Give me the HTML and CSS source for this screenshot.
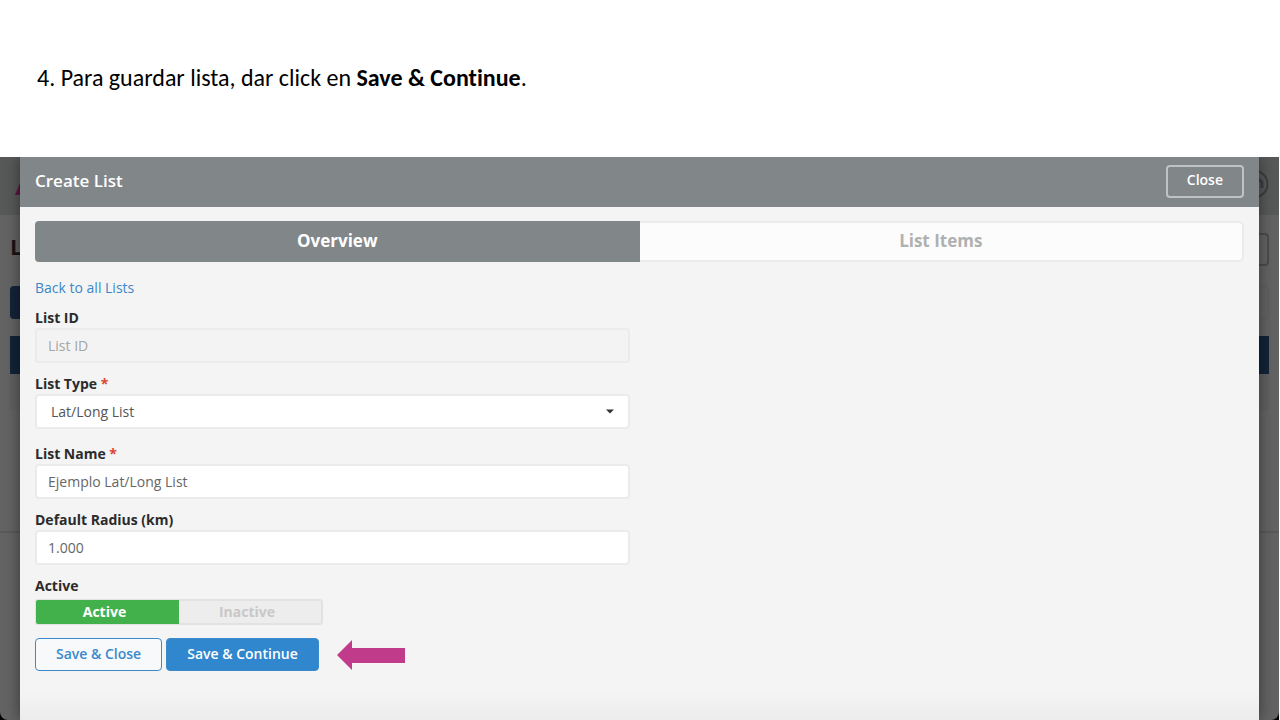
FILE: index.html
```html
<!DOCTYPE html>
<html lang="es">
<head>
<meta charset="utf-8">
<meta name="viewport" content="width=device-width, initial-scale=1">
<title>Create List</title>
<link rel="stylesheet" href="styles.css">
</head>
<body>
<header class="instruction">
  <p>4. Para guardar lista, dar click en <strong>Save &amp; Continue</strong>.</p>
</header>
<main class="stage">
  <div class="backdrop" aria-hidden="true">
    <div class="backdrop-window">
      <div class="backdrop-bar">
        <svg class="backdrop-logo" width="28" height="22" viewBox="0 0 28 22"><path d="M0 22 9 0h6l10 22h-6L12 8 6 22z" fill="#5c1540"/></svg>
        <svg class="backdrop-help" width="30" height="30" viewBox="0 0 30 30" fill="none" stroke="#3c3e40" stroke-width="2"><circle cx="15" cy="15" r="13.500"/><path d="M16 11h3q4 0 4 4v4" stroke-width="3"/></svg>
      </div>
      <div class="backdrop-title"><span>L</span><i class="backdrop-button"></i></div>
      <div class="backdrop-tools"><i class="backdrop-primary"></i><i class="backdrop-search"></i></div>
      <div class="backdrop-table"></div>
    </div>
  </div>
  <section class="modal" role="dialog" aria-labelledby="modal-title">
    <div class="modal-header">
      <h1 id="modal-title">Create List</h1>
      <button class="button button-close" type="button">Close</button>
    </div>
    <form class="modal-body">
      <div class="tabs" role="tablist">
        <button class="tab tab-active" type="button" role="tab" aria-selected="true">Overview</button>
        <button class="tab" type="button" role="tab" aria-selected="false">List Items</button>
      </div>
      <a class="back-link" href="#">Back to all Lists</a>
      <div class="field">
        <label for="list-id">List ID</label>
        <input class="control control-disabled" id="list-id" type="text" placeholder="List ID" disabled>
      </div>
      <div class="field field-select">
        <label for="list-type">List Type <span class="required">*</span></label>
        <div class="select-wrap">
          <select class="control" id="list-type"><option>Lat/Long List</option></select>
          <svg class="caret" width="8" height="5" viewBox="0 0 8 5"><path d="M0 .5h8L4 4.500z" fill="#333"/></svg>
        </div>
      </div>
      <div class="field">
        <label for="list-name">List Name <span class="required">*</span></label>
        <input class="control" id="list-name" type="text" value="Ejemplo Lat/Long List">
      </div>
      <div class="field">
        <label for="radius">Default Radius (km)</label>
        <input class="control" id="radius" type="text" value="1.000">
      </div>
      <fieldset class="status">
        <legend>Active</legend>
        <div class="toggle">
          <input class="toggle-input" type="radio" name="status" id="status-on" checked>
          <label class="toggle-option" for="status-on">Active</label>
          <input class="toggle-input" type="radio" name="status" id="status-off">
          <label class="toggle-option" for="status-off">Inactive</label>
        </div>
      </fieldset>
      <div class="actions">
        <button class="button button-outline" type="button">Save &amp; Close</button>
        <button class="button button-primary" type="button">Save &amp; Continue</button>
        <svg class="arrow" width="68" height="30" viewBox="0 0 68 30" aria-hidden="true"><path d="M0 15 15 0v8h53v15H15v7z" fill="#c03c8a"/></svg>
      </div>
    </form>
  </section>
</main>
</body>
</html>
```
FILE: styles.css
```css
*, *::before, *::after { box-sizing: border-box; }

body {
  margin: 0;
  min-height: 100vh;
  display: flex;
  flex-direction: column;
  background: #fff;
  color: #333;
  font-family: "Open Sans", "Noto Sans", sans-serif;
  font-size: 14px;
  line-height: 20px;
}

button, input, select { font: inherit; }

.instruction {
  padding: 62px 37px 63px;
  color: #000;
  font-family: Carlito, Lato, sans-serif;
  font-size: 24px;
  font-variant-ligatures: none;
  line-height: 32px;
}
.instruction p { margin: 0; }

.stage {
  flex: 1;
  display: grid;
  margin-right: 1px;
  overflow: hidden;
  background: #000;
}
.backdrop, .modal { grid-area: 1 / 1; }

/* dimmed page behind the dialog */
.backdrop {
  display: flex;
  flex-direction: column;
}
.backdrop-window {
  flex: 1;
  border-radius: 0 0 8px 8px;
  background: linear-gradient(transparent 374px, #595959 374px, #595959 376px, transparent 376px), #636363;
}
.backdrop-bar {
  display: flex;
  justify-content: space-between;
  align-items: center;
  height: 58px;
  padding: 0 10px 4px 15px;
  background: #575858;
}
.backdrop-title, .backdrop-tools {
  display: flex;
  justify-content: space-between;
  align-items: center;
  padding: 0 10px;
}
.backdrop-title {
  height: 68px;
  color: #1a1414;
  font-size: 22px;
  font-weight: 700;
}
.backdrop-title span { padding-bottom: 6px; }
.backdrop-button, .backdrop-search, .backdrop-primary {
  width: 80px;
  height: 33px;
  border-radius: 4px;
}
.backdrop-button { border: 2px solid #4b4c4d; }
.backdrop-search { border: 1px solid #5d5d5d; }
.backdrop-primary { background: #142339; }
.backdrop-tools {
  height: 53px;
  padding-bottom: 14px;
}
.backdrop-table {
  height: 196px;
  margin: 0 10px;
  background: linear-gradient(#122438 38px, #606060 38px, #606060 74px, transparent 74px);
}

.modal {
  margin: 0 20px;
  background: linear-gradient(to top, #ececec, #f4f4f4 30px);
  box-shadow: 0 0 14px rgba(0, 0, 0, .45);
  z-index: 1;
}
.modal-header {
  display: flex;
  justify-content: space-between;
  align-items: center;
  height: 50px;
  padding: 0 15px 2px;
  background: #818689;
  color: #fff;
}
.modal-header h1 {
  margin: 0;
  font-size: 17px;
  font-weight: 600;
}
.modal-body { padding: 14px 15px 20px; }

.button {
  height: 33px;
  border: 1px solid #3a8acb;
  border-radius: 4px;
  padding: 0 20px 2px;
  font-weight: 600;
  line-height: 20px;
}
.button-close {
  padding: 0 19px 2px;
  border: 2px solid #bfc2c4;
  background: transparent;
  color: #fff;
}
.button-outline { background: #f8f9fa; color: #3a8acb; }
.button-primary { background: #3087cd; color: #fff; }

.tabs {
  display: grid;
  grid-template-columns: 1fr 1fr;
  height: 41px;
  margin-bottom: 16px;
  border: 2px solid #ebebeb;
  border-radius: 5px;
  background: #fcfcfc;
}
.tab {
  padding: 0 0 2px;
  border: 0;
  background: transparent;
  color: #b0b0b0;
  font-size: 17px;
  font-weight: 700;
}
.tab-active {
  margin: -2px 0 -2px -2px;
  border-radius: 4px 0 0 4px;
  background: #818689;
  color: #fff;
}

.back-link {
  display: block;
  width: max-content;
  margin-bottom: 10px;
  color: #3d88c8;
  text-decoration: none;
}

.field {
  width: 49.2%;
  margin-bottom: 11px;
}
.field-select { margin-bottom: 15px; }
.field label, .status legend {
  display: block;
  padding: 0;
  color: #2b2b2b;
  font-weight: 700;
}
.required { color: #e0442f; }
.control {
  display: block;
  width: 100%;
  height: 35px;
  padding: 0 11px;
  border: 2px solid #ebebeb;
  border-radius: 4px;
  outline: 0;
  background: #fff;
  color: #666;
}
.control::placeholder { color: #a5a5a5; opacity: 1; }
.control-disabled { background: #f3f3f3; }
.select-wrap { position: relative; }
select.control {
  padding: 0 14px;
  appearance: none;
  color: #555;
}
.caret {
  position: absolute;
  top: 15px;
  right: 16px;
  pointer-events: none;
}

.status {
  min-width: 0;
  margin: 0 0 13px;
  padding: 0;
  border: 0;
}
.status legend { margin-bottom: 3px; }
.toggle {
  display: grid;
  grid-template-columns: 1fr 1fr;
  width: 288px;
  height: 26px;
  border: 2px solid #e2e2e2;
  border-radius: 3px;
  background: #ededed;
}
.toggle-input {
  position: absolute;
  opacity: 0;
  pointer-events: none;
}
.toggle-option {
  padding-right: 6px;
  color: #c8c8c8;
  font-weight: 700;
  line-height: 22px;
  text-align: center;
}
.toggle-input:checked + .toggle-option {
  margin: -1px 0 -1px -1px;
  border-radius: 2px 0 0 2px;
  background: #43b14b;
  color: #fff;
  line-height: 24px;
}

.actions {
  display: flex;
  align-items: center;
  gap: 4px;
}
.arrow { margin-left: 14px; }
```
